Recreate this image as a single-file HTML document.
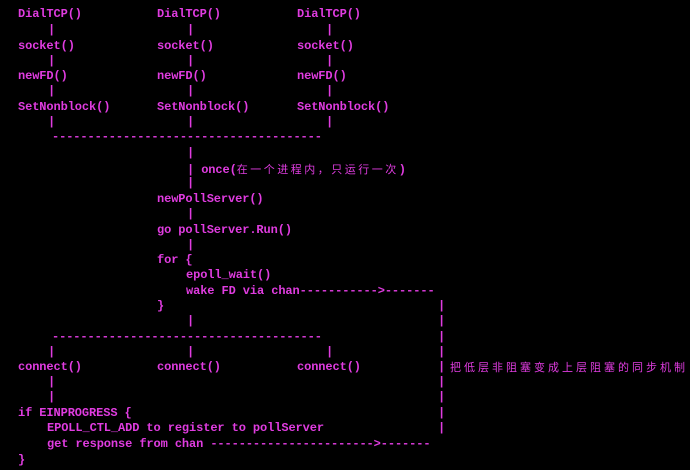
<!DOCTYPE html>
<html><head><meta charset="utf-8"><style>
body{margin:0;background:#000;width:690px;height:470px;overflow:hidden;position:relative}
div{position:absolute;white-space:pre;color:#e03ce0;font-family:"Liberation Mono","Noto Sans CJK SC",monospace;font-size:12px;line-height:16px;height:16px;font-weight:bold;letter-spacing:-0.1px}
.c{font-family:"Noto Sans CJK SC",sans-serif;font-size:11px;letter-spacing:3px;font-weight:normal}
.o{letter-spacing:2.5px}
</style></head><body>
<div style="left:18px;top:6px">DialTCP()</div><div style="left:157px;top:6px">DialTCP()</div><div style="left:297px;top:6px">DialTCP()</div>
<div style="left:48px;top:22px">|</div><div style="left:187px;top:22px">|</div><div style="left:326px;top:22px">|</div>
<div style="left:18px;top:38px">socket()</div><div style="left:157px;top:38px">socket()</div><div style="left:297px;top:38px">socket()</div>
<div style="left:48px;top:53px">|</div><div style="left:187px;top:53px">|</div><div style="left:326px;top:53px">|</div>
<div style="left:18px;top:68px">newFD()</div><div style="left:157px;top:68px">newFD()</div><div style="left:297px;top:68px">newFD()</div>
<div style="left:48px;top:83px">|</div><div style="left:187px;top:83px">|</div><div style="left:326px;top:83px">|</div>
<div style="left:18px;top:99px">SetNonblock()</div><div style="left:157px;top:99px">SetNonblock()</div><div style="left:297px;top:99px">SetNonblock()</div>
<div style="left:48px;top:114px">|</div><div style="left:187px;top:114px">|</div><div style="left:326px;top:114px">|</div>
<div style="left:52px;top:129px">--------------------------------------</div>
<div style="left:187px;top:145px">|</div>
<div style="left:187px;top:161px">| once(<span class="c o">在一个进程内，只运行一次</span>)</div>
<div style="left:187px;top:175px">|</div>
<div style="left:157px;top:191px">newPollServer()</div>
<div style="left:187px;top:206px">|</div>
<div style="left:157px;top:222px">go pollServer.Run()</div>
<div style="left:187px;top:237px">|</div>
<div style="left:157px;top:252px">for {</div>
<div style="left:186px;top:267px">epoll_wait()</div>
<div style="left:186px;top:283px">wake FD via chan----------->-------</div>
<div style="left:157px;top:298px">}</div><div style="left:438px;top:298px">|</div>
<div style="left:187px;top:313px">|</div><div style="left:438px;top:313px">|</div>
<div style="left:52px;top:329px">--------------------------------------</div><div style="left:438px;top:329px">|</div>
<div style="left:48px;top:344px">|</div><div style="left:187px;top:344px">|</div><div style="left:326px;top:344px">|</div><div style="left:438px;top:344px">|</div>
<div style="left:18px;top:359px">connect()</div><div style="left:157px;top:359px">connect()</div><div style="left:297px;top:359px">connect()</div><div style="left:438px;top:359px">|</div><div class="c" style="left:450px;top:359px">把低层非阻塞变成上层阻塞的同步机制</div>
<div style="left:48px;top:374px">|</div><div style="left:438px;top:374px">|</div>
<div style="left:48px;top:389px">|</div><div style="left:438px;top:389px">|</div>
<div style="left:18px;top:405px">if EINPROGRESS {</div><div style="left:438px;top:405px">|</div>
<div style="left:47px;top:420px">EPOLL_CTL_ADD to register to pollServer</div><div style="left:438px;top:420px">|</div>
<div style="left:47px;top:436px">get response from chan ----------------------->-------</div>
<div style="left:18px;top:452px">}</div>
</body></html>
